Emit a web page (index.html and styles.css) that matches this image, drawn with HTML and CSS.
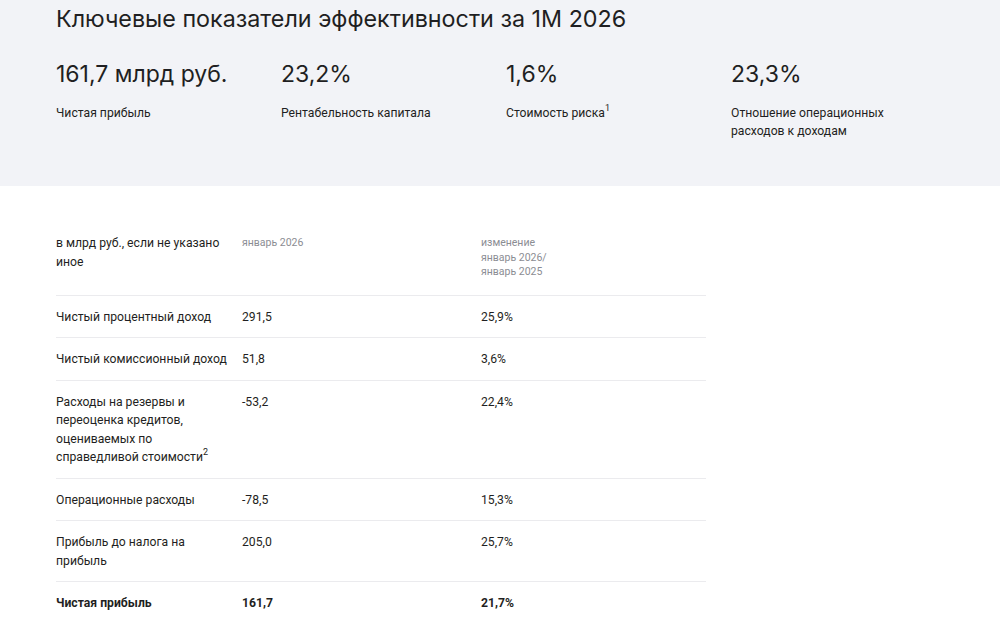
FILE: index.html
```html
<!DOCTYPE html>
<html lang="ru">
<head>
<meta charset="utf-8">
<title>Ключевые показатели</title>
<link rel="stylesheet" href="styles.css">
</head>
<body>
<section class="kpi-band">
  <h1 class="title">Ключевые показатели эффективности за 1М 2026</h1>
  <div class="kpi-grid">
    <div class="kpi">
      <div class="kpi-value">161,7 млрд руб.</div>
      <div class="kpi-label">Чистая прибыль</div>
    </div>
    <div class="kpi">
      <div class="kpi-value">23,2%</div>
      <div class="kpi-label">Рентабельность капитала</div>
    </div>
    <div class="kpi">
      <div class="kpi-value">1,6%</div>
      <div class="kpi-label">Стоимость риска<sup>1</sup></div>
    </div>
    <div class="kpi">
      <div class="kpi-value">23,3%</div>
      <div class="kpi-label">Отношение операционных расходов к доходам</div>
    </div>
  </div>
</section>
<section class="table-wrap">
  <table class="fin">
    <thead>
      <tr>
        <th class="c1">в млрд руб., если не указано иное</th>
        <th class="c2 muted">январь 2026</th>
        <th class="c3 muted">изменение<br>январь 2026/<br>январь 2025</th>
      </tr>
    </thead>
    <tbody>
      <tr><td>Чистый процентный доход</td><td>291,5</td><td>25,9%</td></tr>
      <tr><td>Чистый комиссионный доход</td><td>51,8</td><td>3,6%</td></tr>
      <tr><td>Расходы на резервы и переоценка кредитов, оцениваемых по справедливой стоимости<sup>2</sup></td><td>-53,2</td><td>22,4%</td></tr>
      <tr><td>Операционные расходы</td><td>-78,5</td><td>15,3%</td></tr>
      <tr><td>Прибыль до налога на прибыль</td><td>205,0</td><td>25,7%</td></tr>
      <tr class="total"><td>Чистая прибыль</td><td>161,7</td><td>21,7%</td></tr>
    </tbody>
  </table>
</section>
</body>
</html>
```
FILE: styles.css
```css
* { box-sizing: border-box; }
html, body { margin: 0; padding: 0; }
body {
  font-family: Inter, "Noto Sans", sans-serif;
  color: #1f1f22;
  background: #ffffff;
}
.kpi-band {
  background: #f2f3f7;
  height: 186px;
  padding: 5px 56px 0;
}
.title {
  margin: 0;
  font-size: 23.3px;
  font-weight: 400;
  line-height: 28px;
}
.kpi-grid {
  display: grid;
  grid-template-columns: repeat(4, 225px);
  margin-top: 27px;
}
.kpi-value {
  font-size: 23px;
  line-height: 28px;
}
.kpi-label {
  margin-top: 16px;
  font-family: Roboto, "Noto Sans", sans-serif;
  font-size: 12.2px;
  line-height: 18px;
  width: 170px;
}
sup { font-size: 9px; line-height: 0; vertical-align: 6px; }
.table-wrap {
  padding: 48px 56px 0;
}
.fin {
  width: 650px;
  border-collapse: collapse;
  font-family: Roboto, "Noto Sans", sans-serif;
  font-size: 12.2px;
  line-height: 18.5px;
}
.fin th, .fin td {
  text-align: left;
  vertical-align: top;
  padding: 12px 0 11px;
  font-weight: 400;
}
.fin th { padding-top: 0; padding-bottom: 15px; line-height: 19px; }
.fin .c1 { width: 186px; padding-right: 12px; }
.fin .c2 { width: 239px; }
.fin th.muted { color: #8b8d93; font-size: 10.5px; line-height: 14.5px; padding-top: 2px; }
.fin td:first-child { padding-right: 8px; }
.fin tr + tr td, .fin tbody tr:first-child td { border-top: 1px solid #ebebee; }
.fin .total td { font-weight: 700; }
```
